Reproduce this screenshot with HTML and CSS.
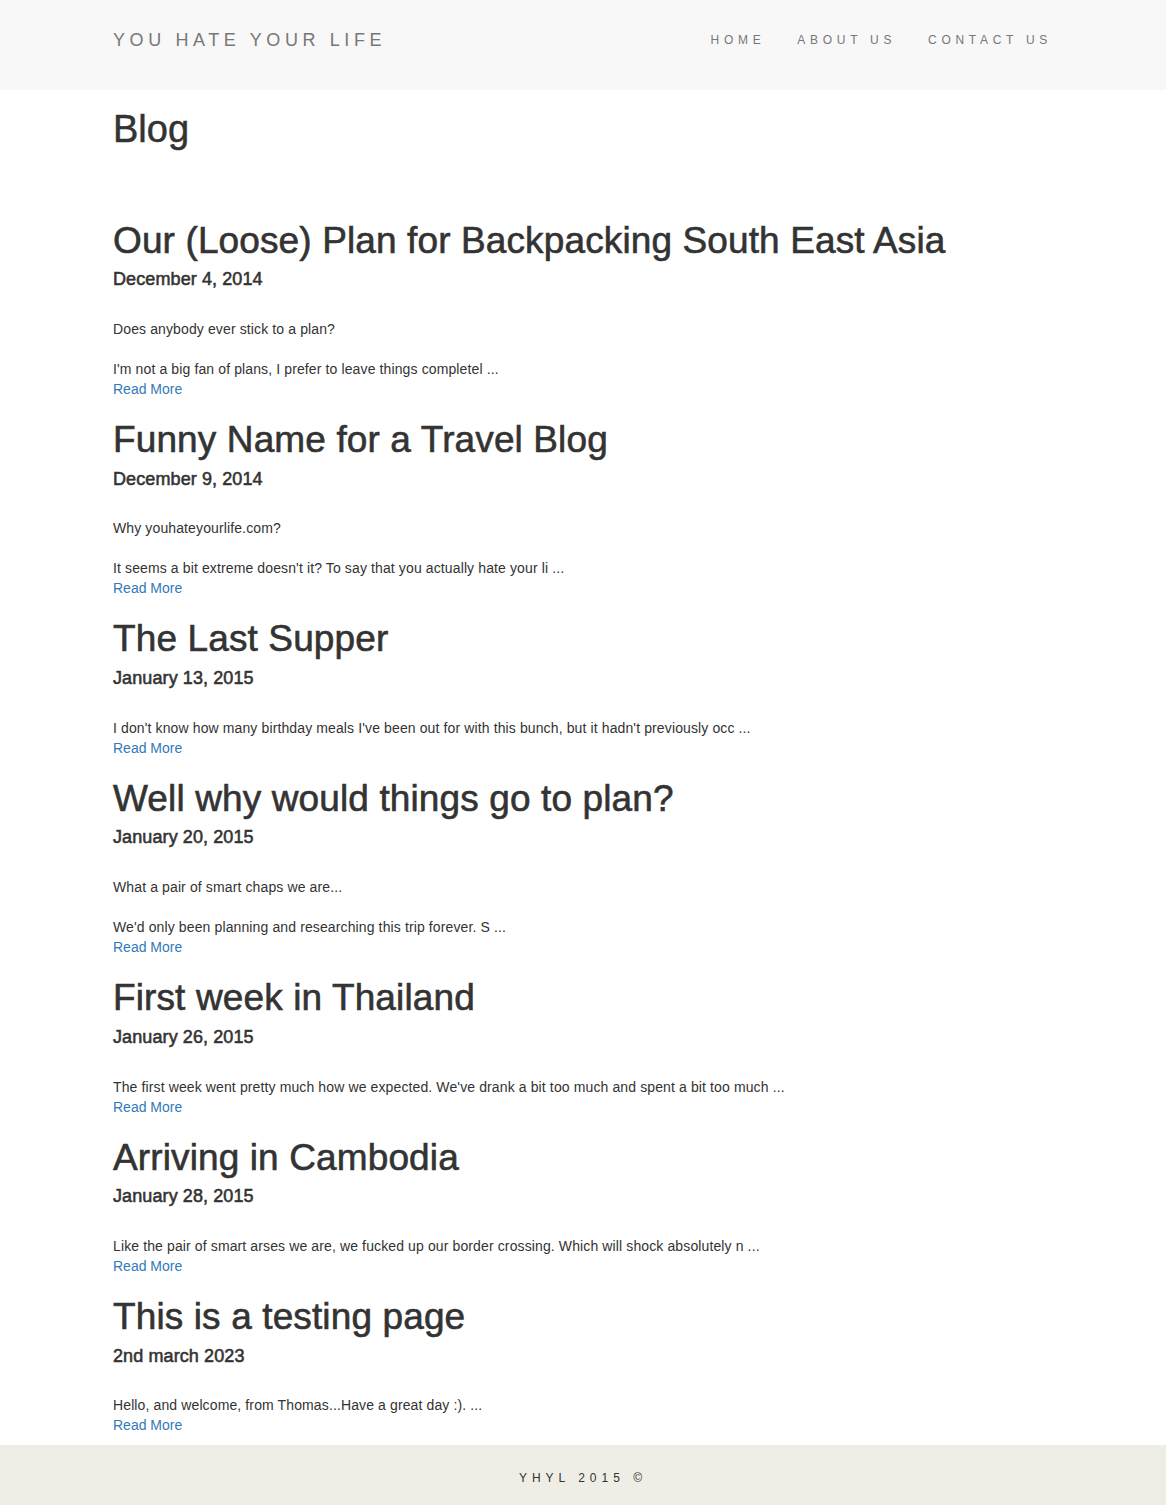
FILE: index.html
```html
<!DOCTYPE html>
<html lang="en">
<head>
<meta charset="utf-8">
<title>Blog - You Hate Your Life</title>
<link rel="stylesheet" href="styles.css">
</head>
<body>
<header class="site-header">
  <div class="container header-inner">
    <a class="brand" href="#">YOU HATE YOUR LIFE</a>
    <nav class="main-nav">
      <a href="#">HOME</a>
      <a href="#">ABOUT US</a>
      <a href="#">CONTACT US</a>
    </nav>
  </div>
</header>
<main class="container content">
  <h1 class="page-title">Blog</h1>
  <article class="post">
    <h2 class="post-title">Our (Loose) Plan for Backpacking South East Asia</h2>
    <h4 class="post-date">December 4, 2014</h4>
    <p class="post-excerpt">Does anybody ever stick to a plan?<br><br>I'm not a big fan of plans, I prefer to leave things completel ...</p>
    <a class="read-more" href="#">Read More</a>
  </article>
  <article class="post">
    <h2 class="post-title">Funny Name for a Travel Blog</h2>
    <h4 class="post-date">December 9, 2014</h4>
    <p class="post-excerpt">Why youhateyourlife.com?<br><br>It seems a bit extreme doesn't it? To say that you actually hate your li ...</p>
    <a class="read-more" href="#">Read More</a>
  </article>
  <article class="post">
    <h2 class="post-title">The Last Supper</h2>
    <h4 class="post-date">January 13, 2015</h4>
    <p class="post-excerpt">I don't know how many birthday meals I've been out for with this bunch, but it hadn't previously occ ...</p>
    <a class="read-more" href="#">Read More</a>
  </article>
  <article class="post">
    <h2 class="post-title">Well why would things go to plan?</h2>
    <h4 class="post-date">January 20, 2015</h4>
    <p class="post-excerpt">What a pair of smart chaps we are...<br><br>We'd only been planning and researching this trip forever. S ...</p>
    <a class="read-more" href="#">Read More</a>
  </article>
  <article class="post">
    <h2 class="post-title">First week in Thailand</h2>
    <h4 class="post-date">January 26, 2015</h4>
    <p class="post-excerpt">The first week went pretty much how we expected. We've drank a bit too much and spent a bit too much ...</p>
    <a class="read-more" href="#">Read More</a>
  </article>
  <article class="post">
    <h2 class="post-title">Arriving in Cambodia</h2>
    <h4 class="post-date">January 28, 2015</h4>
    <p class="post-excerpt">Like the pair of smart arses we are, we fucked up our border crossing. Which will shock absolutely n ...</p>
    <a class="read-more" href="#">Read More</a>
  </article>
  <article class="post">
    <h2 class="post-title">This is a testing page</h2>
    <h4 class="post-date">2nd march 2023</h4>
    <p class="post-excerpt">Hello, and welcome, from Thomas...Have a great day :). ...</p>
    <a class="read-more" href="#">Read More</a>
  </article>
</main>
<footer class="site-footer">
  <p class="footer-text">YHYL 2015 ©</p>
</footer>
</body>
</html>
```

FILE: styles.css
```css
* {
  box-sizing: border-box;
}

html, body {
  margin: 0;
  padding: 0;
}

body {
  font-family: "Liberation Sans", Arial, Helvetica, sans-serif;
  font-size: 14px;
  line-height: 20px;
  color: #333333;
  background: #ffffff;
}

a {
  text-decoration: none;
}

.container {
  width: 970px;
  margin: 0 auto;
  padding: 0 15px;
}

/* Header */
.site-header {
  background: #f8f8f8;
  height: 90px;
}

.header-inner {
  display: flex;
  justify-content: space-between;
  align-items: flex-start;
  padding-top: 30px;
}

.brand {
  font-size: 18px;
  line-height: 20px;
  letter-spacing: 4.6px;
  color: #777777;
}

.main-nav {
  display: flex;
  margin-right: -15px;
}

.main-nav a {
  font-size: 12px;
  line-height: 20px;
  letter-spacing: 4.7px;
  color: #777777;
  padding: 0 16px;
}

/* Content */
.content {
  padding-bottom: 10px;
}

.page-title {
  font-size: 38px;
  font-weight: 400;
  line-height: 39.6px;
  margin: 20px 0 71px;
  color: #333333;
  -webkit-text-stroke: 0.5px #333333;
}

.post-title {
  font-size: 37px;
  font-weight: 400;
  line-height: 39.6px;
  letter-spacing: 0.12px;
  margin: 21px 0 10px;
  color: #333333;
  -webkit-text-stroke: 0.6px #333333;
}

.post-date {
  font-size: 18px;
  font-weight: 400;
  line-height: 19.8px;
  letter-spacing: 0.1px;
  margin: 10px 0 29px;
  color: #333333;
  -webkit-text-stroke: 0.55px #333333;
}

.post-excerpt {
  margin: 0;
  letter-spacing: 0.12px;
}

.read-more {
  display: block;
  color: #337ab7;
}

/* Footer */
.site-footer {
  background: #eeede6;
  height: 60px;
  display: flex;
  align-items: center;
  justify-content: center;
}

.footer-text {
  margin: 0;
  padding-top: 6px;
  font-size: 12px;
  letter-spacing: 5px;
  color: #333333;
}
```
